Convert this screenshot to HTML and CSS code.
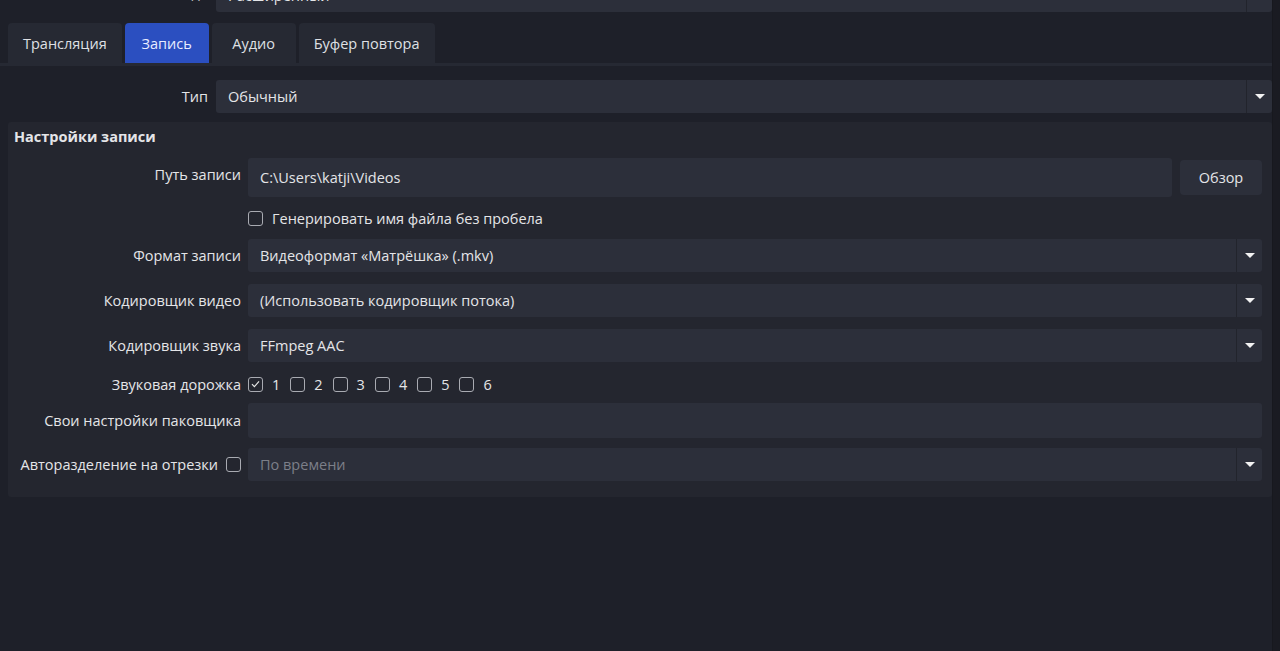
FILE: index.html
```html
<!DOCTYPE html>
<html lang="ru">
<head>
    <meta charset="UTF-8">
    <meta name="viewport" content="width=device-width, initial-scale=1.0">
    <title>Настройки вывода</title>
    <link rel="stylesheet" href="styles.css">
</head>
<body>
<div class="window">
    <div class="content">
        <div class="row top-row">
            <div class="lbl">Режим вывода</div>
            <div class="combo"><span>Расширенный</span><i class="arrow"></i></div>
        </div>

        <div class="tabs">
            <div class="tab">Трансляция</div>
            <div class="tab active">Запись</div>
            <div class="tab">Аудио</div>
            <div class="tab">Буфер повтора</div>
        </div>

        <div class="pane">
            <div class="row type-row">
                <div class="lbl">Тип</div>
                <div class="combo"><span>Обычный</span><i class="arrow"></i></div>
            </div>

            <div class="group">
                <div class="group-title">Настройки записи</div>
                <div class="group-body">
                    <div class="frow path-row">
                        <div class="flbl">Путь записи</div>
                        <div class="field">C:\Users\katji\Videos</div>
                        <button class="btn">Обзор</button>
                    </div>
                    <div class="frow cb-row">
                        <div class="flbl"></div>
                        <label class="check"><span class="box"></span>Генерировать имя файла без пробела</label>
                    </div>
                    <div class="frow">
                        <div class="flbl">Формат записи</div>
                        <div class="combo"><span>Видеоформат «Матрёшка» (.mkv)</span><i class="arrow"></i></div>
                    </div>
                    <div class="frow">
                        <div class="flbl">Кодировщик видео</div>
                        <div class="combo"><span>(Использовать кодировщик потока)</span><i class="arrow"></i></div>
                    </div>
                    <div class="frow">
                        <div class="flbl">Кодировщик звука</div>
                        <div class="combo"><span>FFmpeg AAC</span><i class="arrow"></i></div>
                    </div>
                    <div class="frow tracks-row">
                        <div class="flbl">Звуковая дорожка</div>
                        <div class="tracks">
                            <label class="check"><span class="box"><svg viewBox="0 0 14 14" width="14" height="14"><path d="M3.2 7.2l2.6 2.6 5-5.6" fill="none" stroke="#e6e6e6" stroke-width="1.3"/></svg></span>1</label>
                            <label class="check"><span class="box"></span>2</label>
                            <label class="check"><span class="box"></span>3</label>
                            <label class="check"><span class="box"></span>4</label>
                            <label class="check"><span class="box"></span>5</label>
                            <label class="check"><span class="box"></span>6</label>
                        </div>
                    </div>
                    <div class="frow packer-row">
                        <div class="flbl">Свои настройки паковщика</div>
                        <div class="field"></div>
                    </div>
                    <div class="frow">
                        <div class="flbl">Авторазделение на отрезки <span class="box"></span></div>
                        <div class="combo disabled"><span>По времени</span><i class="arrow"></i></div>
                    </div>
                </div>
            </div>
        </div>
    </div>
    <div class="edge"></div>
</div>
</body>
</html>
```

FILE: styles.css
```css
* {
    margin: 0;
    padding: 0;
    box-sizing: border-box;
}
html, body {
    height: 100%;
    overflow: hidden;
}
body {
    background-color: #1e2029;
    color: #e4e5e8;
    font-family: 'Open Sans', 'Noto Sans', sans-serif;
    font-size: 14.5px;
}
.window {
    display: flex;
    height: 100%;
}
.content {
    flex: 1;
}
.edge {
    width: 8px;
    background-color: #1a1b22;
    border-left: 1px solid #17181e;
}

/* rows with a label column and a combo */
.row {
    display: flex;
    align-items: center;
}
.row .lbl {
    width: 216px;
    text-align: right;
    padding-right: 8px;
    flex-shrink: 0;
}
.top-row {
    height: 34px;
    margin-top: -22px;
}
.top-row .lbl {
    white-space: nowrap;
    padding-bottom: 6px;
}

.combo {
    flex: 1;
    height: 33px;
    background-color: #2c2f3a;
    border-radius: 3px;
    display: flex;
    align-items: center;
    padding-left: 12px;
}
.combo span {
    flex: 1;
}
.combo .arrow {
    width: 26px;
    height: 100%;
    border-left: 1px solid #22242c;
    display: flex;
    align-items: center;
    justify-content: center;
}
.combo .arrow::after {
    content: "";
    border-left: 5px solid transparent;
    border-right: 5px solid transparent;
    border-top: 5px solid #f2f2f2;
}
.combo.disabled span {
    color: #7c7f89;
}

/* tabs */
.tabs {
    display: flex;
    gap: 3px;
    padding-left: 8px;
    margin-top: 11px;
}
.tab {
    height: 40px;
    min-width: 84px;
    padding: 0 15px;
    display: flex;
    align-items: center;
    justify-content: center;
    background-color: #262933;
    border-radius: 4px 4px 0 0;
    color: #dfe0e4;
}
.tab.active {
    background-color: #2b4fc0;
    color: #e8ecff;
}
.pane {
    border-top: 3px solid #262933;
    padding-top: 14px;
}
.type-row {
    height: 33px;
}

/* group box */
.group {
    margin: 9px 0 0 8px;
    background-color: #24262f;
    border-radius: 3px;
    padding-bottom: 16px;
}
.group-title {
    font-weight: bold;
    padding: 5px 0 0 6px;
    height: 36px;
}
.group-body {
    display: flex;
    flex-direction: column;
    gap: 12px;
    padding-right: 10px;
}
.frow {
    display: flex;
    align-items: center;
    height: 33px;
}
.flbl {
    width: 240px;
    flex-shrink: 0;
    text-align: right;
    padding-right: 7px;
    display: flex;
    justify-content: flex-end;
    align-items: center;
    gap: 8px;
    white-space: nowrap;
}
.field {
    flex: 1;
    height: 100%;
    background-color: #2c2f3a;
    border-radius: 3px;
    padding-left: 12px;
    display: flex;
    align-items: center;
}
.path-row {
    height: 39px;
}
.path-row .flbl {
    align-self: flex-start;
    padding-top: 7px;
}
.btn {
    width: 82px;
    height: 35px;
    margin-left: 8px;
    background-color: #2c2f3a;
    border: none;
    border-radius: 4px;
    color: #e4e5e8;
    font-family: inherit;
    font-size: 14.5px;
}
.cb-row {
    height: 18px;
}
.tracks-row {
    height: 20px;
    margin-bottom: -3px;
}
.packer-row {
    height: 35px;
    margin-bottom: -2px;
}

/* checkboxes */
.check {
    display: flex;
    align-items: center;
    gap: 9px;
}
.box {
    width: 15px;
    height: 15px;
    border: 1.5px solid #a9abb2;
    border-radius: 3px;
    display: inline-flex;
    align-items: center;
    justify-content: center;
    flex-shrink: 0;
}
.box svg {
    display: block;
}
.tracks {
    display: flex;
    gap: 10px;
}
```
